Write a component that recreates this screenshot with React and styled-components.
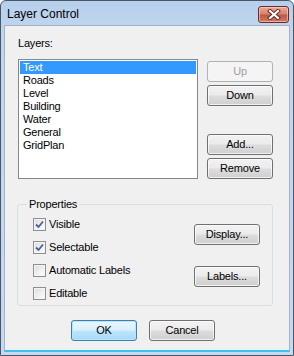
import React from 'react'
import styled, { createGlobalStyle, css } from 'styled-components'

const GlobalStyle = createGlobalStyle`
    html, body {
        margin: 0;
        padding: 0;
        background: #ffffff;
    }
    body {
        font-family: "Liberation Sans", Arial, sans-serif;
        font-size: 11px;
        letter-spacing: -0.2px;
        color: #000;
    }
`

const Window = styled.div`
    width: 294px;
    height: 356px;
    box-sizing: border-box;
    border: 1px solid #4a5668;
    border-radius: 6px 6px 0 0;
    background: linear-gradient(#b6cfeb, #c0d6ef 30px, #c5daf0);
    display: flex;
    flex-direction: column;
    overflow: hidden;
`

const TitleBar = styled.div`
    height: 24px;
    flex: none;
    display: flex;
    align-items: center;
    justify-content: space-between;
    padding: 0 4px 0 6px;

    .title {
        font-size: 12px;
        letter-spacing: 0;
        margin-top: 2px;
    }
`

const CloseButton = styled.div`
    width: 31px;
    height: 17px;
    box-sizing: border-box;
    margin-top: 2px;
    border: 1px solid #6f2a22;
    border-radius: 3px;
    background: linear-gradient(#e9aa9c, #d8836f 45%, #c15842 55%, #d07a64);
    box-shadow: inset 0 0 0 1px rgba(255, 220, 210, 0.55);
    display: flex;
    align-items: center;
    justify-content: center;
`

const Client = styled.div`
    flex: 1;
    margin: 0 3px 3px 3px;
    background: #f0f0f0;
    border: 1px solid #a3b4c9;
    border-bottom: 2px solid #3cc2ec;
    box-sizing: border-box;
    padding: 11px 0 0 13px;
    display: flex;
    flex-direction: column;
`

const Label = styled.div`
    height: 13px;
    line-height: 13px;
    margin-bottom: 9px;
`

const TopRow = styled.div`
    display: flex;
    gap: 9px;
`

const ListBox = styled.div`
    width: 180px;
    height: 120px;
    box-sizing: border-box;
    border: 1px solid #828790;
    background: #fff;
    padding: 1px;
`

const ListItem = styled.div`
    height: 13px;
    line-height: 13px;
    padding-left: 3px;
    ${p => p.$selected && css`
        background: #3399ff;
        color: #fff;
    `}
`

const ButtonColumn = styled.div`
    display: flex;
    flex-direction: column;
    gap: 3px;
    padding-top: 2px;

    .spacer {
        height: 22px;
    }
`

const Button = styled.div`
    width: 66px;
    height: 21px;
    box-sizing: border-box;
    border: 1px solid #707070;
    border-radius: 3px;
    background: linear-gradient(#f2f2f2, #ebebeb 48%, #dddddd 52%, #cfcfcf);
    box-shadow: inset 0 0 0 1px rgba(255, 255, 255, 0.7);
    display: flex;
    align-items: center;
    justify-content: center;
    line-height: 13px;
    ${p => p.$disabled && css`
        border-color: #adb2b5;
        background: #f4f4f4;
        box-shadow: none;
        color: #a0a0a0;
    `}
    ${p => p.$default && css`
        border-color: #3c7fb1;
        background: linear-gradient(#eaf6fd, #d9f0fc 48%, #bee6fd 52%, #a7d9f5);
        box-shadow: inset 0 0 0 1px #b8e5fc;
    `}
`

const GroupBox = styled.fieldset`
    margin: 19px 0 0 -1px;
    width: 256px;
    height: 108px;
    box-sizing: border-box;
    border: 1px solid #d5dfe5;
    border-radius: 3px;
    padding: 0 12px 0 15px;
    display: flex;
    justify-content: space-between;

    legend {
        margin-left: -6px;
        padding: 0 2px;
        line-height: 13px;
    }
`

const CheckColumn = styled.div`
    display: flex;
    flex-direction: column;
    gap: 9px;
    padding-top: 6px;
`

const CheckRow = styled.label`
    display: flex;
    align-items: center;
    gap: 3px;
    height: 14px;
`

const CheckBox = styled.span`
    width: 13px;
    height: 13px;
    box-sizing: border-box;
    border: 1px solid #8f8f8f;
    background: linear-gradient(135deg, #dcdcdc, #ffffff);
    box-shadow: inset 0 0 0 1px #f4f4f4;
    display: flex;
    align-items: center;
    justify-content: center;
`

const SideButtons = styled.div`
    display: flex;
    flex-direction: column;
    gap: 21px;
    padding-top: 13px;
`

const Footer = styled.div`
    display: flex;
    gap: 12px;
    margin: 14px 0 0 53px;
`

const layers = ['Text', 'Roads', 'Level', 'Building', 'Water', 'General', 'GridPlan']

const Check = ({ checked, children }) => (
    <CheckRow>
        <CheckBox>
            {checked && (
                <svg width="9" height="9" viewBox="0 0 9 9">
                    <path d="M1 4.5 L3.5 7 L8 1.5" fill="none" stroke="#4a5f97" strokeWidth="1.8" />
                </svg>
            )}
        </CheckBox>
        {children}
    </CheckRow>
)

const App = () => {
    return (
        <>
            <GlobalStyle />
            <Window>
                <TitleBar>
                    <span className='title'>Layer Control</span>
                    <CloseButton>
                        <svg width="14" height="11" viewBox="0 0 14 11">
                            <path d="M3 2 L11 9 M11 2 L3 9" stroke="#5a2a24" strokeWidth="4" strokeLinecap="square" />
                            <path d="M3 2 L11 9 M11 2 L3 9" stroke="#ffffff" strokeWidth="2.2" strokeLinecap="square" />
                        </svg>
                    </CloseButton>
                </TitleBar>
                <Client>
                    <Label>Layers:</Label>
                    <TopRow>
                        <ListBox>
                            {layers.map((l, i) => (
                                <ListItem key={l} $selected={i === 0}>{l}</ListItem>
                            ))}
                        </ListBox>
                        <ButtonColumn>
                            <Button $disabled>Up</Button>
                            <Button>Down</Button>
                            <div className='spacer' />
                            <Button>Add...</Button>
                            <Button>Remove</Button>
                        </ButtonColumn>
                    </TopRow>
                    <GroupBox>
                        <legend>Properties</legend>
                        <CheckColumn>
                            <Check checked>Visible</Check>
                            <Check checked>Selectable</Check>
                            <Check>Automatic Labels</Check>
                            <Check>Editable</Check>
                        </CheckColumn>
                        <SideButtons>
                            <Button>Display...</Button>
                            <Button>Labels...</Button>
                        </SideButtons>
                    </GroupBox>
                    <Footer>
                        <Button $default>OK</Button>
                        <Button>Cancel</Button>
                    </Footer>
                </Client>
            </Window>
        </>
    )
}

export default App
